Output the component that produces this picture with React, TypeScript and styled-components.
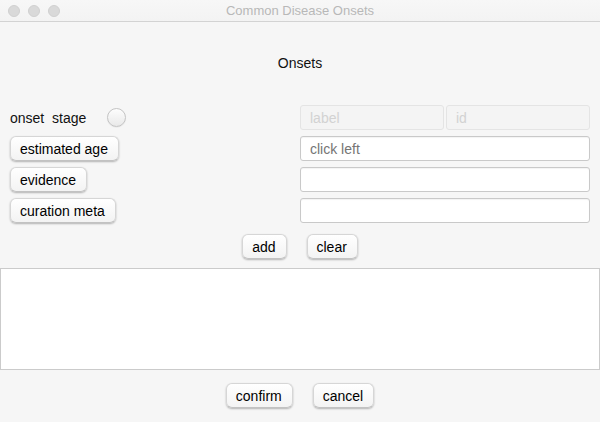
import React from "react";
import styled, { createGlobalStyle } from "styled-components";

const GlobalStyle = createGlobalStyle`
    html, body {
        margin: 0;
        padding: 0;
        background: #f6f6f6;
    }
    #root {
        width: 600px;
        height: 422px;
        overflow: hidden;
    }
`;

const App = () => {
    return (
        <>
            <GlobalStyle />
            <Window>
                <TitleBar>
                    <Lights>
                        <Light />
                        <Light />
                        <Light />
                    </Lights>
                    <Title>Common Disease Onsets</Title>
                </TitleBar>

                <Heading>Onsets</Heading>

                <Form>
                    <LeftCell>
                        <StageLabel>onset  stage</StageLabel>
                        <Radio />
                    </LeftCell>
                    <Pair>
                        <Field placeholder="label" disabled />
                        <Field placeholder="id" disabled />
                    </Pair>

                    <LeftCell>
                        <Button>estimated age</Button>
                    </LeftCell>
                    <Field placeholder="click left" />

                    <LeftCell>
                        <Button>evidence</Button>
                    </LeftCell>
                    <Field />

                    <LeftCell>
                        <Button>curation meta</Button>
                    </LeftCell>
                    <Field />
                </Form>

                <ButtonRow $top={11}>
                    <Button>add</Button>
                    <Button>clear</Button>
                </ButtonRow>

                <ListArea />

                <ButtonRow $top={13}>
                    <Button>confirm</Button>
                    <Button>cancel</Button>
                </ButtonRow>
            </Window>
        </>
    );
};

export default App;

const Window = styled.div`
    display: flex;
    flex-direction: column;
    width: 600px;
    height: 422px;
    background: #f6f6f6;
    font-family: "Liberation Sans", Arial, sans-serif;
    font-size: 14px;
    color: #111;
`;

const TitleBar = styled.div`
    position: relative;
    display: flex;
    align-items: center;
    justify-content: center;
    height: 21px;
    border-bottom: 1px solid #d3d3d3;
    background: linear-gradient(#f7f7f7, #f3f3f3);
`;

const Lights = styled.div`
    position: absolute;
    left: 8px;
    top: 5px;
    display: flex;
    gap: 8px;
`;

const Light = styled.span`
    width: 12px;
    height: 12px;
    box-sizing: border-box;
    border-radius: 50%;
    background: #d9d9d9;
    border: 1px solid #d0d0d0;
`;

const Title = styled.div`
    font-size: 13px;
    color: #b8b8b8;
    line-height: 21px;
`;

const Heading = styled.div`
    margin-top: 33px;
    text-align: center;
    line-height: 16px;
`;

const Form = styled.div`
    display: grid;
    grid-template-columns: 1fr 290px;
    grid-auto-rows: 25px;
    row-gap: 6px;
    margin-top: 34px;
    padding: 0 10px;
`;

const LeftCell = styled.div`
    display: flex;
    align-items: center;
`;

const StageLabel = styled.span`
    white-space: pre;
    margin-right: 21px;
`;

const Radio = styled.span`
    width: 19px;
    height: 19px;
    box-sizing: border-box;
    border-radius: 50%;
    border: 1px solid #c4c4c4;
    background: linear-gradient(#fdfdfd, #e9e9e9);
    box-shadow: 0 0.5px 1px rgba(0, 0, 0, 0.08);
`;

const Pair = styled.div`
    display: grid;
    grid-template-columns: 1fr 1fr;
    gap: 2px;
`;

const Field = styled.input`
    box-sizing: border-box;
    width: 100%;
    height: 25px;
    margin: 0;
    padding: 0 9px;
    border: 1px solid #c9c9c9;
    border-radius: 3px;
    background: #fff;
    box-shadow: inset 0 1px 1px rgba(0, 0, 0, 0.05);
    font-family: inherit;
    font-size: 14px;
    outline: none;

    ::placeholder {
        color: #aaaaaa;
    }

    &:disabled {
        background: #f4f4f4;
        border-color: #e4e4e4;
        box-shadow: none;
    }

    &:disabled::placeholder {
        color: #d2d2d2;
    }
`;

const Button = styled.button`
    box-sizing: border-box;
    height: 25px;
    margin: 0;
    padding: 0 10px 0 9px;
    border: 1px solid #d6d6d6;
    border-bottom-color: #c2c2c2;
    border-radius: 6px;
    background: linear-gradient(#ffffff, #f3f3f3);
    box-shadow: 0 1px 2px rgba(0, 0, 0, 0.28);
    font-family: inherit;
    font-size: 14px;
    color: #000;
    cursor: pointer;
`;

const ButtonRow = styled.div<{ $top: number }>`
    display: flex;
    justify-content: center;
    gap: 20px;
    margin-top: ${(p) => p.$top}px;
`;

const ListArea = styled.div`
    box-sizing: border-box;
    height: 102px;
    margin-top: 9px;
    border: 1px solid #cbcbcb;
    background: #fff;
`;
